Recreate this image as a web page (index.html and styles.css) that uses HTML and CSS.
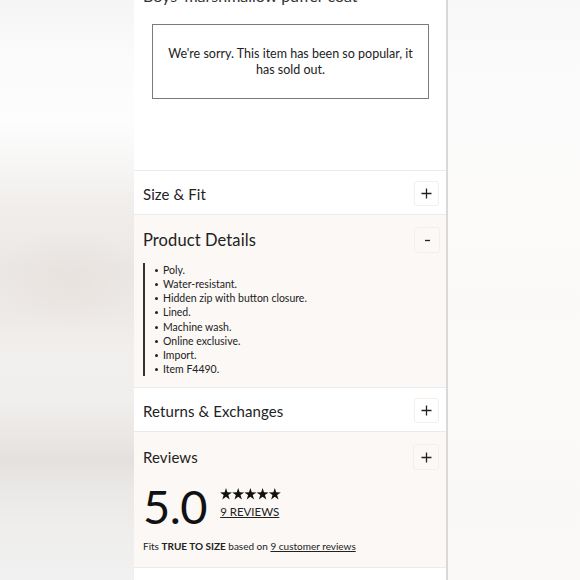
FILE: index.html
```html
<!DOCTYPE html>
<html lang="en">
<head>
<meta charset="utf-8">
<title>Boys' marshmallow puffer coat</title>
<link rel="stylesheet" href="styles.css">
</head>
<body>
<div class="page">
  <div class="backdrop backdrop-left"></div>
  <main class="column">
    <h1 class="product-title">Boys' marshmallow puffer coat</h1>
    <div class="soldout">
      <p>We're sorry. This item has been so popular, it has sold out.</p>
    </div>

    <section class="acc">
      <div class="acc-head">
        <h2 class="acc-title">Size &amp; Fit</h2>
        <button class="acc-btn" aria-label="Expand">
          <svg width="11" height="11" viewBox="0 0 11 11"><path d="M5.5 0.5v10M0.5 5.5h10" stroke="#222" stroke-width="1.3" fill="none"/></svg>
        </button>
      </div>
    </section>

    <section class="acc acc-open">
      <div class="acc-head acc-head-open">
        <h2 class="acc-title acc-title-lg">Product Details</h2>
        <button class="acc-btn" aria-label="Collapse">
          <svg width="11" height="11" viewBox="0 0 11 11"><path d="M3 5.5h5" stroke="#222" stroke-width="1.3" fill="none"/></svg>
        </button>
      </div>
      <ul class="details">
        <li>Poly.</li>
        <li>Water-resistant.</li>
        <li>Hidden zip with button closure.</li>
        <li>Lined.</li>
        <li>Machine wash.</li>
        <li>Online exclusive.</li>
        <li>Import.</li>
        <li>Item F4490.</li>
      </ul>
    </section>

    <section class="acc">
      <div class="acc-head">
        <h2 class="acc-title">Returns &amp; Exchanges</h2>
        <button class="acc-btn" aria-label="Expand">
          <svg width="11" height="11" viewBox="0 0 11 11"><path d="M5.5 0.5v10M0.5 5.5h10" stroke="#222" stroke-width="1.3" fill="none"/></svg>
        </button>
      </div>
    </section>

    <section class="acc acc-open">
      <div class="acc-head acc-head-rev">
        <h2 class="acc-title">Reviews</h2>
        <button class="acc-btn" aria-label="Expand">
          <svg width="11" height="11" viewBox="0 0 11 11"><path d="M5.5 0.5v10M0.5 5.5h10" stroke="#222" stroke-width="1.3" fill="none"/></svg>
        </button>
      </div>
      <div class="rating">
        <div class="score">5.0</div>
        <div class="rating-meta">
          <svg class="stars" width="61" height="12" viewBox="0 0 61 12" aria-label="5 stars">
            <g fill="#111">
              <polygon points="6,0 7.4,4.3 12,4.4 8.3,7.1 9.7,11.5 6,8.8 2.3,11.5 3.7,7.1 0,4.4 4.6,4.3"/>
              <polygon transform="translate(12.2 0)" points="6,0 7.4,4.3 12,4.4 8.3,7.1 9.7,11.5 6,8.8 2.3,11.5 3.7,7.1 0,4.4 4.6,4.3"/>
              <polygon transform="translate(24.4 0)" points="6,0 7.4,4.3 12,4.4 8.3,7.1 9.7,11.5 6,8.8 2.3,11.5 3.7,7.1 0,4.4 4.6,4.3"/>
              <polygon transform="translate(36.6 0)" points="6,0 7.4,4.3 12,4.4 8.3,7.1 9.7,11.5 6,8.8 2.3,11.5 3.7,7.1 0,4.4 4.6,4.3"/>
              <polygon transform="translate(48.8 0)" points="6,0 7.4,4.3 12,4.4 8.3,7.1 9.7,11.5 6,8.8 2.3,11.5 3.7,7.1 0,4.4 4.6,4.3"/>
            </g>
          </svg>
          <a class="reviews-link" href="#">9 REVIEWS</a>
        </div>
      </div>
      <p class="fit">Fits <strong>TRUE TO SIZE</strong> based on <a href="#">9 customer reviews</a></p>
    </section>

    <section class="acc acc-tail"></section>
  </main>
  <div class="backdrop backdrop-right"></div>
</div>
</body>
</html>
```

FILE: styles.css
```css
* { box-sizing: border-box; }

html, body {
  margin: 0;
  padding: 0;
  height: 100%;
}

body {
  font-family: Lato, "Open Sans", "Liberation Sans", sans-serif;
  color: #222;
  overflow: hidden;
}

.page {
  display: grid;
  grid-template-columns: 134px 314px 1fr;
  height: 580px;
}

.backdrop-left {
  background:
    radial-gradient(ellipse 70px 50px at 70px 280px, rgba(228,222,218,0.55), rgba(228,222,218,0) 100%),
    linear-gradient(180deg,
      #f5f5f5 0px,
      #fbfbfb 60px,
      #fdfdfd 120px,
      #f7f6f5 165px,
      #f0edeb 210px,
      #ebe7e4 270px,
      #ede9e6 310px,
      #f2f0ee 360px,
      #f1efee 400px,
      #e9e6e3 440px,
      #e4e0dd 460px,
      #ebe9e7 490px,
      #efeeed 530px,
      #f1f1f1 580px);
}

.backdrop-right {
  background: linear-gradient(180deg,
    #f8f8f8 0px,
    #fbfbfb 100px,
    #fcfbfa 200px,
    #fbf9f7 300px,
    #fbfaf9 400px,
    #faf8f6 500px,
    #fbf9f8 580px);
}

.column {
  background: #fff;
  border-right: 2px solid #d9d9d9;
  display: flex;
  flex-direction: column;
  overflow: hidden;
}

.product-title {
  margin: -13px 0 0;
  padding: 0 9px;
  font-size: 16px;
  line-height: 18px;
  font-weight: 400;
  color: #333;
  white-space: nowrap;
}

.soldout {
  margin: 19px 17px 0 18px;
  height: 75px;
  border: 1px solid #7a7a7a;
  display: flex;
  align-items: center;
  justify-content: center;
  padding: 0 8px;
}

.soldout p {
  margin: 0;
  text-align: center;
  font-size: 12.5px;
  line-height: 16px;
  color: #222;
}

.acc {
  border-top: 1px solid #ebebeb;
  background: #fff;
}

.soldout + .acc {
  margin-top: 71px;
}

.acc-open {
  background: #fbf8f5;
}

.acc-head {
  display: flex;
  align-items: center;
  justify-content: space-between;
  padding: 10px 7px 8px 9px;
}

.acc-head-open {
  padding: 12px 6px 0 9px;
}

.acc-head-rev {
  padding: 12px 7px 0 9px;
}

.acc-title {
  margin: 0;
  font-size: 15px;
  font-weight: 400;
  color: #222;
  letter-spacing: 0.1px;
}

.acc-title-lg {
  font-size: 16.5px;
}

.acc-btn {
  width: 25px;
  height: 25px;
  padding: 0;
  border: 1px solid #f2f0ee;
  border-radius: 3px;
  background: transparent;
  display: flex;
  align-items: center;
  justify-content: center;
}

.acc-open .acc-btn {
  width: 26px;
  height: 26px;
}

.details {
  list-style: none;
  margin: 10px 0 11px 9px;
  padding: 0 0 0 10px;
  border-left: 2px solid #333;
}

.details li {
  font-size: 10.5px;
  line-height: 14.14px;
  color: #222;
  position: relative;
  padding-left: 8px;
}

.details li::before {
  content: "";
  position: absolute;
  left: 0;
  top: 6px;
  width: 3px;
  height: 3px;
  background: #222;
  border-radius: 50%;
}

.rating {
  display: flex;
  align-items: flex-start;
  gap: 13px;
  padding: 10px 9px 0;
}

.score {
  font-size: 47px;
  line-height: 52px;
  font-weight: 400;
  color: #111;
  letter-spacing: -0.5px;
}

.rating-meta {
  display: flex;
  flex-direction: column;
  gap: 5px;
  padding-top: 8px;
}

.stars {
  display: block;
}

.reviews-link {
  font-size: 11.5px;
  color: #222;
  text-decoration: underline;
  letter-spacing: 0;
}

.fit {
  margin: 8px 9px 0;
  padding-bottom: 15px;
  font-size: 10px;
  color: #222;
}

.fit strong {
  font-weight: 700;
}

.fit a {
  color: #222;
  text-decoration: underline;
}

.acc-tail {
  flex: 1;
  background: #fff;
}
```
